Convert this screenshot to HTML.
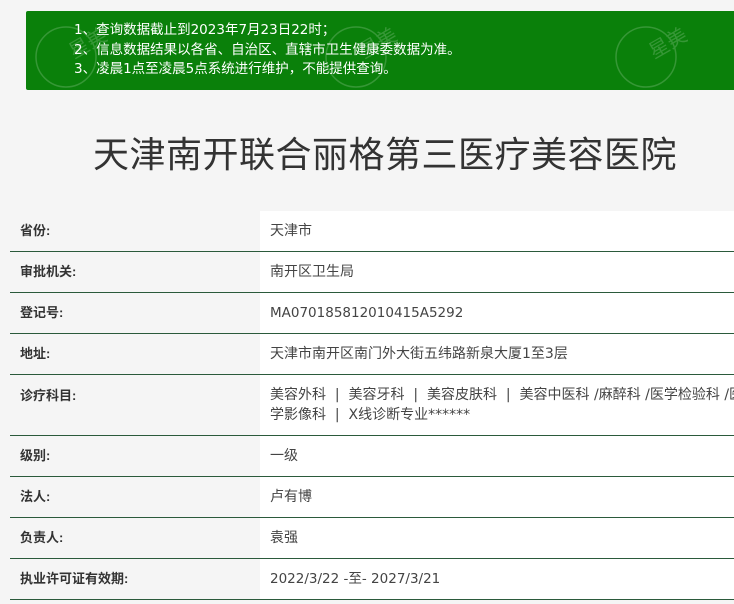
<!DOCTYPE html>
<html><head><meta charset="utf-8">
<style>
*{margin:0;padding:0;box-sizing:border-box}
html,body{width:734px;height:604px;overflow:hidden;background:#f5f5f5;font-family:"Liberation Sans","Noto Sans CJK SC",sans-serif;position:relative}
.banner{position:absolute;left:26px;top:11px;width:720px;height:79px;background:#0a800a;border-radius:2px;color:#fff;font-family:"DejaVu Sans","Noto Sans CJK SC",sans-serif;font-size:13.5px;line-height:19.5px;padding:10px 0 0 48px;overflow:hidden}
.banner div{position:relative;z-index:2;white-space:nowrap}
.wm{position:absolute;top:8px;z-index:1;opacity:.18}
h1{position:absolute;left:0;width:770px;top:126px;text-align:center;font-size:36px;font-weight:normal;color:#333;letter-spacing:0.5px}
.row{position:absolute;left:10px;width:724px;border-bottom:1.5px solid #2b5a3b}
.lab{position:absolute;left:0;top:0;bottom:0;width:250px;padding:0 0 0 10px;font-size:13px;font-weight:bold;color:#333}
.val{position:absolute;left:250px;top:0;bottom:0;right:0;background:#fff;padding-left:10px;font-family:"DejaVu Sans","Noto Sans CJK SC",sans-serif;font-size:13.5px;color:#444;white-space:nowrap;overflow:hidden}
.cn{font-size:14px}
</style></head><body>
<div class="banner">
<svg class="wm" style="left:0" width="110" height="72" viewBox="0 0 110 72"><circle cx="40" cy="38" r="30" fill="none" stroke="#fff" stroke-width="1.5"/><text x="48" y="40" fill="#fff" font-size="20" transform="rotate(-30 48 40)">星美</text></svg>
<svg class="wm" style="left:290px" width="110" height="72" viewBox="0 0 110 72"><circle cx="40" cy="38" r="30" fill="none" stroke="#fff" stroke-width="1.5"/><text x="48" y="40" fill="#fff" font-size="20" transform="rotate(-30 48 40)">星美</text></svg>
<svg class="wm" style="left:580px" width="110" height="72" viewBox="0 0 110 72"><circle cx="40" cy="38" r="30" fill="none" stroke="#fff" stroke-width="1.5"/><text x="48" y="40" fill="#fff" font-size="20" transform="rotate(-30 48 40)">星美</text></svg>
<div>1、查询数据截止到2023年7月23日22时；</div>
<div>2、信息数据结果以各省、自治区、直辖市卫生健康委数据为准。</div>
<div>3、凌晨1点至凌晨5点系统进行维护，不能提供查询。</div>
</div>
<h1>天津南开联合丽格第三医疗美容医院</h1>

<div class="row" style="top:211px;height:41px"><div class="lab" style="line-height:40px">省份:</div><div class="val cn" style="line-height:40px">天津市</div></div>
<div class="row" style="top:252px;height:41px"><div class="lab" style="line-height:40px">审批机关:</div><div class="val cn" style="line-height:40px">南开区卫生局</div></div>
<div class="row" style="top:293px;height:41px"><div class="lab" style="line-height:40px">登记号:</div><div class="val" style="line-height:40px">MA070185812010415A5292</div></div>
<div class="row" style="top:334px;height:41px"><div class="lab" style="line-height:40px">地址:</div><div class="val cn" style="line-height:40px">天津市南开区南门外大街五纬路新泉大厦1至3层</div></div>
<div class="row" style="top:375px;height:61px"><div class="lab" style="padding-top:11px;line-height:20px">诊疗科目:</div><div class="val cn" style="padding-top:10px;line-height:20px">美容外科 &nbsp;| &nbsp;美容牙科 &nbsp;| &nbsp;美容皮肤科 &nbsp;| &nbsp;美容中医科 /麻醉科 /医学检验科 /医<br>学影像科 &nbsp;| &nbsp;X线诊断专业******</div></div>
<div class="row" style="top:436px;height:41px"><div class="lab" style="line-height:40px">级别:</div><div class="val cn" style="line-height:40px">一级</div></div>
<div class="row" style="top:477px;height:41px"><div class="lab" style="line-height:40px">法人:</div><div class="val cn" style="line-height:40px">卢有博</div></div>
<div class="row" style="top:518px;height:41px"><div class="lab" style="line-height:40px">负责人:</div><div class="val cn" style="line-height:40px">袁强</div></div>
<div class="row" style="top:559px;height:41px"><div class="lab" style="line-height:40px">执业许可证有效期:</div><div class="val" style="line-height:40px">2022/3/22 -至- 2027/3/21</div></div>
</body></html>
